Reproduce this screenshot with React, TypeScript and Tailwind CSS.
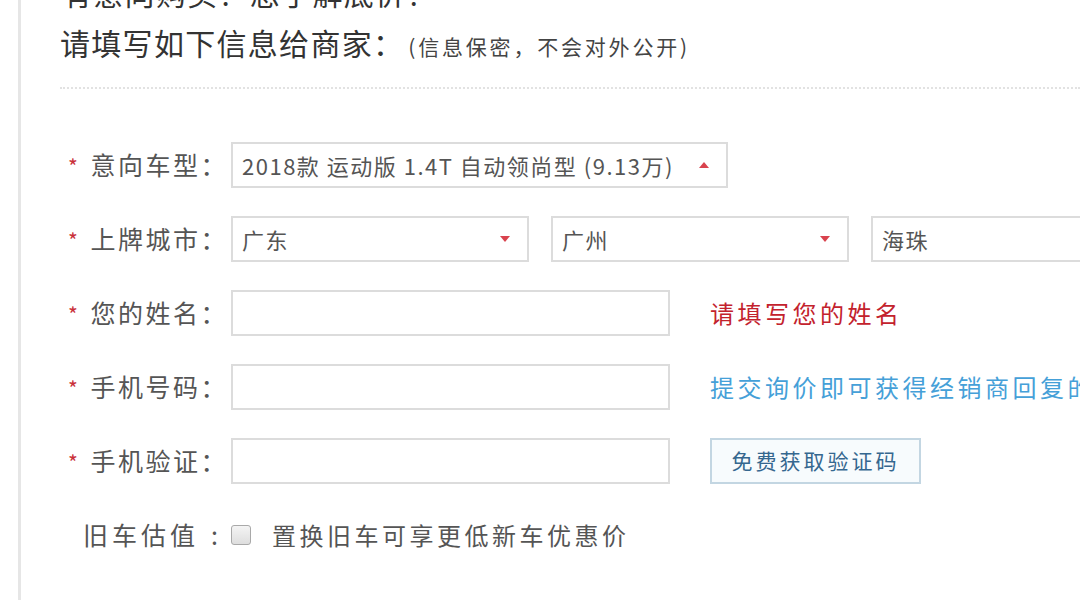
const font = "font-['Noto_Sans_CJK_SC','Noto_Sans',sans-serif]";

function Caret({ up }: { up?: boolean }) {
  return (
    <svg width="12" height="8" viewBox="0 0 12 8" className="shrink-0">
      {up ? (
        <polygon points="6,1 11,7 1,7" fill="#d9434e" />
      ) : (
        <polygon points="1,1 11,1 6,7" fill="#d9434e" />
      )}
    </svg>
  );
}

function Label({ text }: { text: string }) {
  return (
    <div className="w-[171px] h-full shrink-0 flex items-center pl-[8px] pr-[3px] text-[25px] text-[#555]">
      <span className="text-[#c9303a] text-[21px] mt-[3px]">*</span>
      <span className="ml-auto tracking-[2.5px]">{text}</span>
    </div>
  );
}

function SelectBox({ value, width, up }: { value: string; width: string; up?: boolean }) {
  return (
    <div
      className={`${width} h-[46px] shrink-0 border-2 border-[#dcdcdc] bg-white flex items-center justify-between pl-[9px] pr-[16px] text-[22px] tracking-[1.5px] text-[#555]`}
    >
      <span className="whitespace-nowrap">{value}</span>
      {up !== undefined && <Caret up={up} />}
    </div>
  );
}

function TextInput() {
  return <div className="w-[439px] h-[46px] shrink-0 border-2 border-[#dcdcdc] bg-white" />;
}

export default function App() {
  return (
    <div className={`w-[1080px] h-[600px] overflow-hidden bg-white ${font}`}>
      <div className="ml-[18px] h-full flex flex-col border-l-[3px] border-[#e6e6e6] pl-[39px]">
        {/* heading */}
        <div className="mt-[-33px] text-[30px] leading-[50px] tracking-[1.3px] text-[#333] whitespace-nowrap">
          <div className="pl-[2px]">有意向购买？想了解底价！</div>
          <div className="flex items-baseline">
            <span>请填写如下信息给商家：</span>
            <span className="ml-[4px] text-[21px] tracking-[2.8px] text-[#444]">(信息保密，不会对外公开)</span>
          </div>
        </div>

        <div className="mt-[16px] border-t-2 border-dotted border-[#e2e2e2]" />

        {/* form */}
        <div className="mt-[53px] flex flex-col gap-[28px]">
          <div className="flex items-center h-[46px]">
            <Label text="意向车型：" />
            <SelectBox value="2018款 运动版 1.4T 自动领尚型 (9.13万)" width="w-[497px]" up />
          </div>

          <div className="flex items-center h-[46px]">
            <Label text="上牌城市：" />
            <div className="flex items-center gap-[22px]">
              <SelectBox value="广东" width="w-[298px]" up={false} />
              <SelectBox value="广州" width="w-[298px]" up={false} />
              <SelectBox value="海珠" width="w-[298px]" />
            </div>
          </div>

          <div className="flex items-center h-[46px]">
            <Label text="您的姓名：" />
            <TextInput />
            <span className="ml-[40px] text-[24px] tracking-[3.5px] text-[#c3222d] whitespace-nowrap">请填写您的姓名</span>
          </div>

          <div className="flex items-center h-[46px]">
            <Label text="手机号码：" />
            <TextInput />
            <span className="ml-[40px] text-[24px] tracking-[3.5px] text-[#45a0d8] whitespace-nowrap">
              提交询价即可获得经销商回复的最低价
            </span>
          </div>

          <div className="flex items-center h-[46px]">
            <Label text="手机验证：" />
            <TextInput />
            <button className="ml-[40px] w-[211px] h-[46px] border-2 border-[#c3d6e2] bg-[#f7fbfd] text-[21px] tracking-[3px] text-[#35678f]">
              免费获取验证码
            </button>
          </div>

          <div className="flex items-center h-[46px]">
            <div className="w-[171px] shrink-0 flex items-center pl-[23px] text-[25px] text-[#555]">
              <span className="tracking-[4px]">旧车估值</span>
              <span className="ml-[12px]">:</span>
            </div>
            <div className="w-[20px] h-[20px] rounded-[3px] border border-[#a9a9a9] bg-gradient-to-b from-[#f4f4f4] to-[#dedede] shrink-0" />
            <span className="ml-[21px] text-[24px] tracking-[3.5px] text-[#555] whitespace-nowrap">
              置换旧车可享更低新车优惠价
            </span>
          </div>
        </div>
      </div>
    </div>
  );
}
